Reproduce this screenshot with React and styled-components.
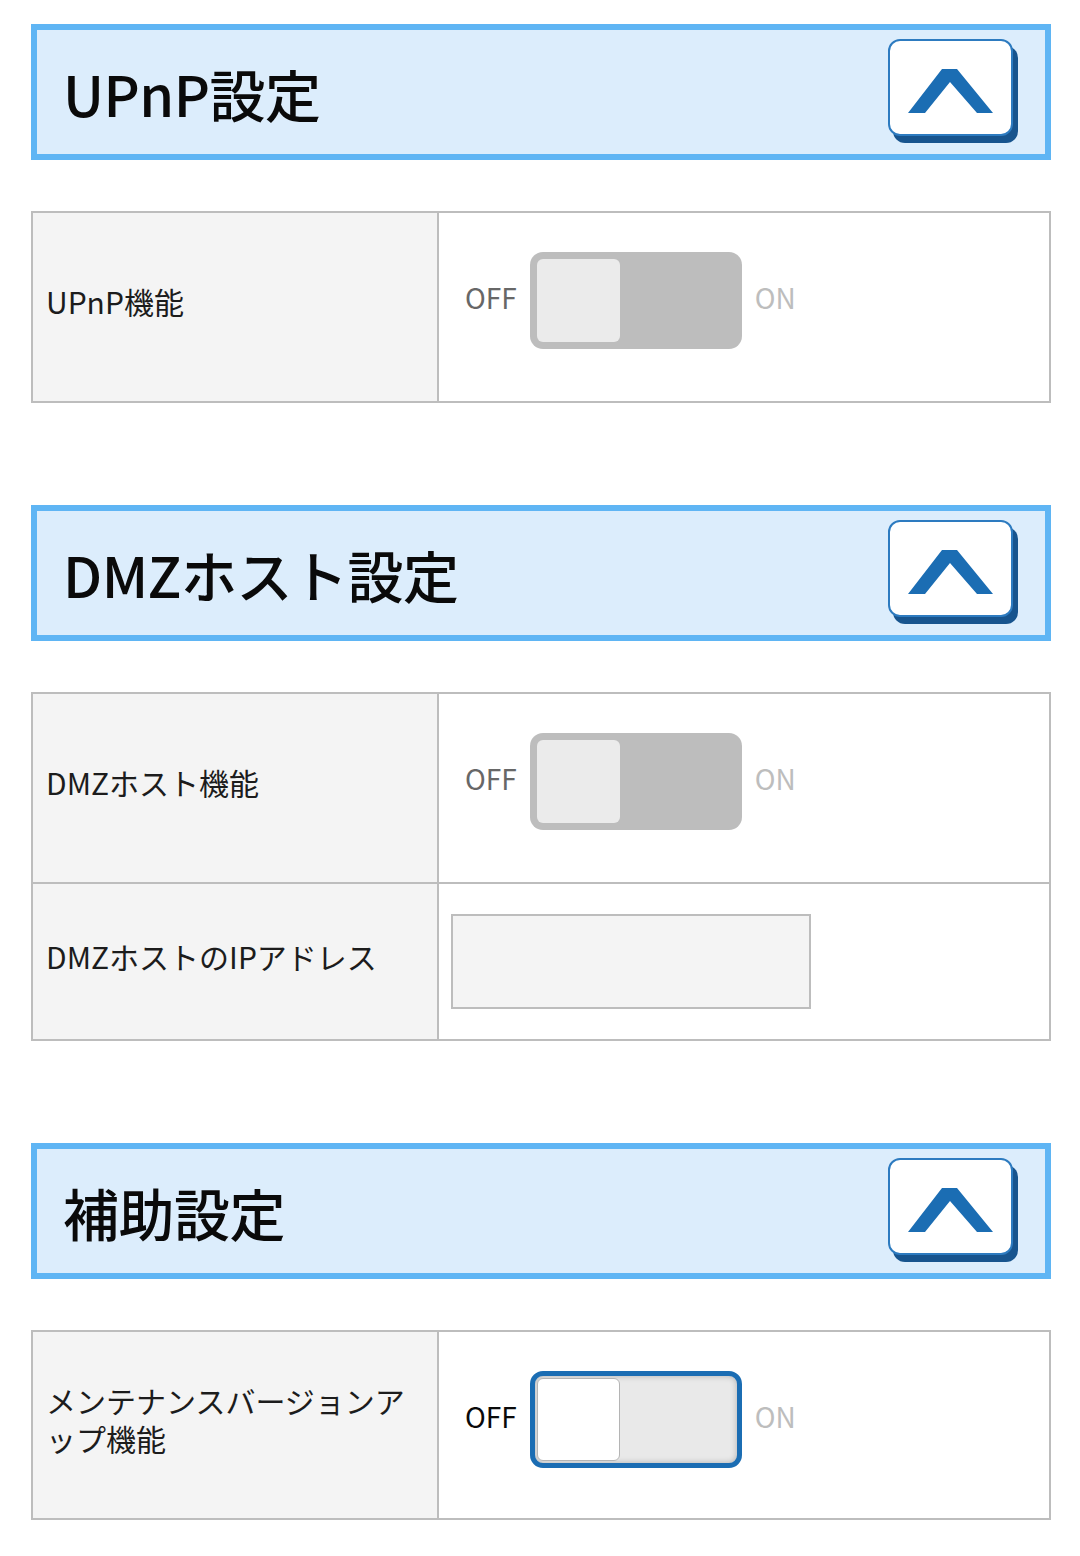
import styled, { createGlobalStyle } from "styled-components";

const GlobalStyle = createGlobalStyle`
  body {
    margin: 0;
    background: #ffffff;
    font-family: "Noto Sans CJK JP", "Noto Sans", sans-serif;
    color: #1a1a1a;
  }
`;

const Page = styled.div`
  width: 1020px;
  padding: 24px 0 34px 31px;
`;

const Section = styled.section`
  margin-bottom: 102px;

  &:last-child {
    margin-bottom: 0;
  }
`;

const Header = styled.div`
  box-sizing: border-box;
  height: 136px;
  display: flex;
  align-items: center;
  justify-content: space-between;
  padding: 0 32px 0 26px;
  border: 6px solid #5fb5f4;
  background: #dcedfc;
`;

const Title = styled.h2`
  margin: 0;
  font-size: 56px;
  font-weight: 500;
  letter-spacing: -0.5px;
  color: #0a0a0a;
  line-height: 1;
  padding-top: 2px;
`;

const CollapseButton = styled.button`
  box-sizing: border-box;
  width: 125px;
  height: 97px;
  margin-bottom: 10px;
  padding: 0;
  display: flex;
  align-items: center;
  justify-content: center;
  background: #ffffff;
  border: 2px solid #2d7bc0;
  border-radius: 12px;
  box-shadow: 5px 7px 0 #17548e;
  cursor: pointer;
`;

const Table = styled.div`
  margin-top: 51px;
  border: 2px solid #bdbdbd;
  display: grid;
  grid-template-columns: 406px 1fr;
`;

const Label = styled.div`
  box-sizing: border-box;
  height: ${(p) => p.$height}px;
  display: flex;
  align-items: center;
  padding: 0 30px 12px 13px;
  background: #f4f4f4;
  border-right: 2px solid #bdbdbd;
  border-top: ${(p) => (p.$first ? "none" : "2px solid #bdbdbd")};
  font-size: 30px;
  line-height: 38px;
  color: #1c1c1c;
`;

const Value = styled.div`
  box-sizing: border-box;
  height: ${(p) => p.$height}px;
  display: flex;
  align-items: ${(p) => (p.$top ? "flex-start" : "center")};
  padding: ${(p) => (p.$top ? "39px 0 0 26px" : "0 0 0 12px")};
  border-top: ${(p) => (p.$first ? "none" : "2px solid #bdbdbd")};
`;

const SwitchRow = styled.div`
  display: flex;
  align-items: center;
`;

const SwitchText = styled.span`
  font-size: 28px;
  line-height: 1;
  color: ${(p) => p.$color};
  margin: ${(p) => (p.$side === "left" ? "0 13px 0 0" : "0 0 0 13px")};
  padding-bottom: 8px;
`;

const Track = styled.div`
  box-sizing: border-box;
  width: 212px;
  height: 97px;
  border-radius: 13px;
  padding: ${(p) => (p.$active ? "2px" : "7px")};
  background: ${(p) => (p.$active ? "#e9e9e9" : "#bdbdbd")};
  border: ${(p) => (p.$active ? "5px solid #1b6db3" : "none")};
  box-shadow: ${(p) => (p.$active ? "inset 0 0 6px rgba(0, 0, 0, 0.25)" : "none")};
`;

const Knob = styled.div`
  box-sizing: border-box;
  width: 83px;
  height: 100%;
  border-radius: 6px;
  background: ${(p) => (p.$active ? "#ffffff" : "#ebebeb")};
  border: ${(p) => (p.$active ? "1px solid #b4b4b4" : "none")};
`;

const AddressInput = styled.input`
  box-sizing: border-box;
  width: 360px;
  height: 95px;
  border: 2px solid #bdbdbd;
  background: #f4f4f4;
  font-size: 30px;
  font-family: inherit;
  padding: 0 12px;
  outline: none;
`;

const Chevron = () => (
  <svg width="121" height="93" viewBox="0 0 121 93">
    <polygon
      points="18,72 52,28 67,28 103,72 87,72 60,41 35,72"
      fill="#1b6db3"
    />
  </svg>
);

const Switch = ({ active }) => (
  <SwitchRow>
    <SwitchText $side="left" $color={active ? "#0a0a0a" : "#676767"}>
      OFF
    </SwitchText>
    <Track $active={active}>
      <Knob $active={active} />
    </Track>
    <SwitchText $side="right" $color="#bdbdbd">
      ON
    </SwitchText>
  </SwitchRow>
);

const sections = [
  {
    title: "UPnP設定",
    rows: [{ label: "UPnP機能", type: "switch", height: 188 }],
  },
  {
    title: "DMZホスト設定",
    rows: [
      { label: "DMZホスト機能", type: "switch", height: 188 },
      { label: "DMZホストのIPアドレス", type: "input", height: 157 },
    ],
  },
  {
    title: "補助設定",
    rows: [
      {
        label: "メンテナンスバージョンアップ機能",
        type: "switch",
        height: 186,
        active: true,
      },
    ],
  },
];

export default function App() {
  return (
    <Page>
      <GlobalStyle />
      {sections.map((section) => (
        <Section key={section.title}>
          <Header>
            <Title>{section.title}</Title>
            <CollapseButton aria-label="閉じる">
              <Chevron />
            </CollapseButton>
          </Header>
          <Table>
            {section.rows.map((row, i) => [
              <Label key={row.label + "-l"} $height={row.height} $first={i === 0}>
                {row.label}
              </Label>,
              <Value
                key={row.label + "-v"}
                $height={row.height}
                $first={i === 0}
                $top={row.type === "switch"}
              >
                {row.type === "switch" ? (
                  <Switch active={row.active} />
                ) : (
                  <AddressInput type="text" />
                )}
              </Value>,
            ])}
          </Table>
        </Section>
      ))}
    </Page>
  );
}
